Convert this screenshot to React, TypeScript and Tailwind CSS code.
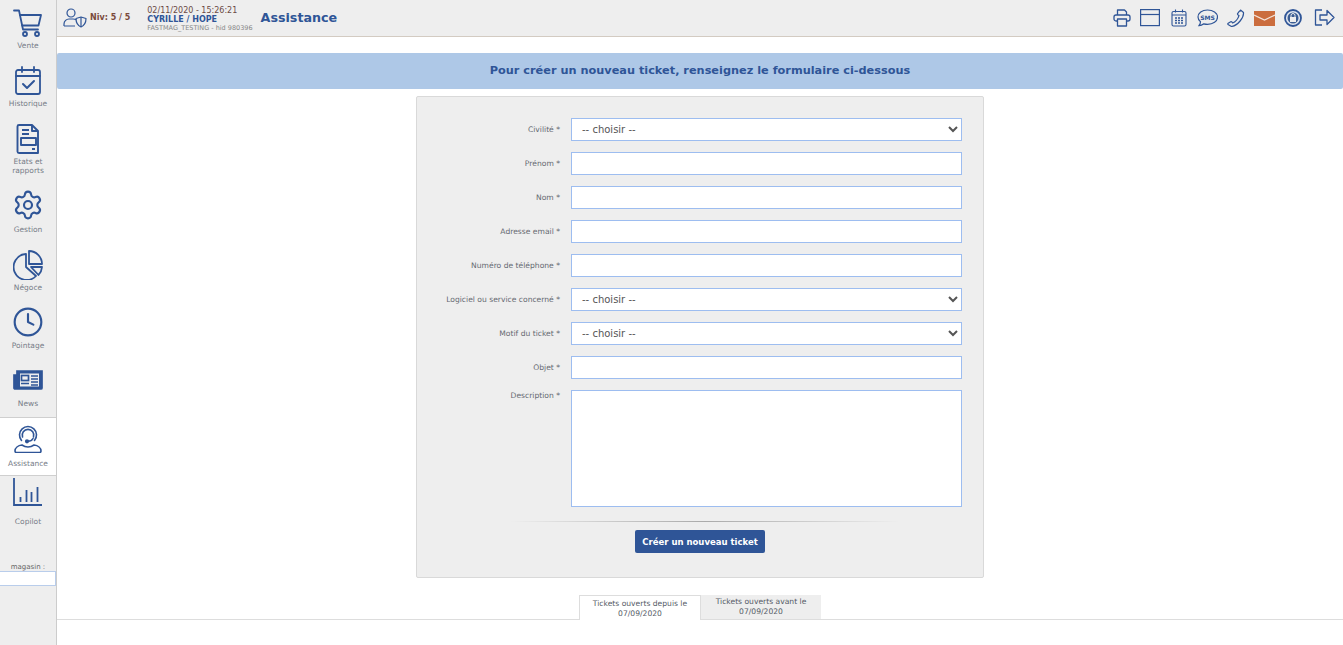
import { Clock, Settings } from "lucide-react";
import type { ReactNode } from "react";

const blue = "#2f5597";
const texture = "bg-[#eeeeee] bg-[radial-gradient(#e2e2e2_0.6px,transparent_0.7px)] bg-[length:4px_4px]";

const Cart = () => (
  <svg width="30" height="30" viewBox="0 0 30 30" fill="none" stroke={blue} strokeWidth="1.8" strokeLinejoin="round" strokeLinecap="round">
    <path d="M1 2.5h5l4 19h15" />
    <path d="M7 7h21l-2.5 10.5H9.200" />
    <circle cx="12" cy="26" r="2" />
    <circle cx="24" cy="26" r="2" />
  </svg>
);

const Calendar = () => (
  <svg width="30" height="30" viewBox="0 0 30 30" fill="none" stroke={blue} strokeWidth="1.8" strokeLinejoin="round" strokeLinecap="round">
    <rect x="3" y="4" width="24" height="24" rx="2" />
    <path d="M3 10h24M9 1v5M21 1v5" />
    <path d="M10 18l4 4 7-7" strokeWidth="2" />
  </svg>
);

const Report = () => (
  <svg width="30" height="30" viewBox="0 0 30 30" fill="none" stroke={blue} strokeWidth="1.9" strokeLinejoin="round">
    <path d="M6 1h13l6 6v22H6a1.500 1.500 0 0 1-1.500-1.500v-25A1.500 1.500 0 0 1 6 1z" />
    <path d="M19 1v6h6M9 6h7M9 10h7M19 25h3" />
    <rect x="8" y="14" width="15" height="7" />
  </svg>
);

const Pie = () => (
  <svg width="30" height="30" viewBox="0 0 30 30" fill="none" stroke={blue} strokeWidth="1.8" strokeLinejoin="round">
    <path d="M13 4A13 13 0 1 0 23 26L13 17z" />
    <path d="M16 1A13 13 0 0 1 29 14H16z" />
    <path d="M18 17H29A13 13 0 0 1 25.500 25z" />
  </svg>
);

const News = () => (
  <svg width="30" height="20" viewBox="0 0 30 20" fill="none" stroke={blue} strokeWidth="1.700">
    <path d="M4 1h25v17a1 1 0 0 1-1 1H2a1 1 0 0 1-1-1V5h3z" fill={blue} />
    <rect x="7" y="3.500" width="19" height="13" fill="#eeeeee" stroke="none" />
    <rect x="8.500" y="5.500" width="7" height="5" />
    <path d="M8 13.500h8M18 6h7M18 9h7M18 12h7M18 15h7" />
  </svg>
);

const Agent = () => (
  <svg width="28" height="28" viewBox="0 0 28 28" fill="none" stroke={blue} strokeWidth="1.600" strokeLinecap="round">
    <path d="M7.500 15.500A8.500 8.500 0 1 1 20.500 15.500" />
    <path d="M8.500 12a5.800 5.800 0 1 1 11 0" />
    <path d="M19 13.500c-1 2-2.500 2.800-5 2.800" />
    <circle cx="13" cy="16.300" r="1.300" fill={blue} />
    <path d="M8 20c-4 .5-7 3-7 6 0 1 .5 1.500 1.500 1.500h23c1 0 1.500-.5 1.500-1.500 0-3-3-5.500-7-6-2 1.500-3.500 2-6 2s-4-.5-6-2z" strokeLinejoin="round" />
  </svg>
);

const Bars = () => (
  <svg width="30" height="29" viewBox="0 0 30 29" fill="none" stroke={blue} strokeWidth="1.800">
    <path d="M1 0v27h28" />
    <path d="M7.500 24v-5M13.500 24V12M18.500 24V14M24.500 24V9" strokeWidth="1.800" />
  </svg>
);

const PrinterIcon = () => (
  <svg width="18" height="18" viewBox="0 0 18 18" fill="none" stroke={blue} strokeWidth="1.300" strokeLinejoin="round">
    <path d="M4.500 6V1h7l2 2v3" />
    <rect x="1" y="6" width="16" height="6" rx="2" />
    <rect x="4.500" y="10" width="9" height="7" fill="#eeeeee" />
  </svg>
);

const WindowIcon = () => (
  <svg width="20" height="18" viewBox="0 0 20 18" fill="none" stroke={blue} strokeWidth="1.200">
    <rect x="0.600" y="0.600" width="18.800" height="16" />
    <path d="M1 5.500h18" />
  </svg>
);

const CalendarSmall = () => (
  <svg width="16" height="18" viewBox="0 0 16 18" fill="none" stroke={blue} strokeWidth="1.100">
    <rect x="1" y="2.500" width="14" height="14.500" rx="1.500" />
    <path d="M1 6h14M4.500 0.500v3M11.500 0.500v3" />
    <path d="M4 9h8M4 11.500h8M4 14h8" strokeWidth="1.500" strokeDasharray="2 1" />
  </svg>
);

const Sms = () => (
  <svg width="21" height="18" viewBox="0 0 21 18" fill="none" stroke={blue} strokeWidth="1.200">
    <path d="M10.500 1C5 1 1 4 1 8c0 2 1 3.500 2.500 4.700 0 1.500-.7 2.800-1.500 4 1.800 0 3.500-.8 4.800-1.900 1.200.3 2.400.5 3.700.5 5.500 0 10-3 10-7.300S16 1 10.500 1z" />
    <text x="10.500" y="10.500" textAnchor="middle" fontSize="6" fontWeight="700" fontFamily="'DejaVu Sans', sans-serif" fill={blue} stroke="none">SMS</text>
  </svg>
);

const PhoneIcon = () => (
  <svg width="18" height="18" viewBox="0 0 18 18" fill="none" stroke={blue} strokeWidth="1.200" strokeLinejoin="round">
    <path d="M13.500 1l3 2.500c.5 5-5.500 13-12 14L1 15.500c-.3-.5-.2-1 .2-1.300l2.500-1.500c.4-.2.800-.1 1.100.2l.9 1.100c2.500-1 5.500-4.500 6.300-7.500l-1.200-.8c-.3-.3-.4-.7-.2-1.100l1.800-2.500c.2-.3.600-.4.900-.1z" />
  </svg>
);

const Envelope = () => (
  <svg width="21" height="15" viewBox="0 0 21 15">
    <rect width="21" height="15" fill="#cb6d3e" />
    <path d="M0 4l10.500 5L21 4" fill="none" stroke="#f4e4da" strokeWidth="1.200" />
  </svg>
);

const LockIcon = () => (
  <svg width="18" height="18" viewBox="0 0 18 18" fill="none">
    <circle cx="9" cy="9" r="8" fill="#dfe5ee" stroke={blue} strokeWidth="1.800" />
    <circle cx="9" cy="9" r="5.500" fill="#3b5d93" />
    <path d="M7 8V6.500a2 2 0 0 1 4 0V8" stroke="#eeeeee" strokeWidth="1" />
    <rect x="6" y="8" width="6" height="5" fill="#eeeeee" />
  </svg>
);

const Exit = () => (
  <svg width="21" height="18" viewBox="0 0 21 18" fill="none" stroke={blue} strokeWidth="1.300" strokeLinejoin="round">
    <path d="M8 1H1.500v15H8" />
    <path d="M6 6h7V1.500L20 8.500l-7 7V11H6z" />
  </svg>
);

const UserShield = () => (
  <svg width="24" height="20" viewBox="0 0 24 20" fill="none" stroke={blue} strokeWidth="1.200" strokeLinejoin="round">
    <circle cx="8" cy="5" r="4" />
    <path d="M1 18v-2c0-3 2.500-5 5-5h4c1.500 0 2.500.4 3.500 1M1 18h11" />
    <path d="M18 9l5 1.500c0 4-1.500 7-5 8.500-3.500-1.500-5-4.500-5-8.500z" />
    <path d="M18 9v10" />
  </svg>
);

function NavItem({ icon, label, h = "h-[58px]", active = false }: { icon: ReactNode; label: ReactNode; h?: string; active?: boolean }) {
  return (
    <div className={`${h} flex flex-col items-center ${active ? "bg-white border-y border-[#cfcfcf]" : ""}`}>
      <div className="h-[38px] flex items-end justify-center">{icon}</div>
      <div className="mt-[3px] text-[7.500px] leading-[9px] text-center text-[#777d88]">{label}</div>
    </div>
  );
}

function Row({ label, children }: { label: string; children: ReactNode }) {
  return (
    <div className="flex h-[34px]">
      <label className="w-[133px] pt-[7px] text-right text-[7.600px] leading-[10px] text-[#666a72] whitespace-nowrap">{label} *</label>
      <div className="ml-[11px] w-[391px]">{children}</div>
    </div>
  );
}

const fieldClass = "block w-full h-[23px] bg-white border border-[#9dbdf0] text-[#555555] text-[10px] outline-none";

function Choice() {
  return (
    <select className={`${fieldClass} pl-[6px]`} defaultValue="">
      <option value="">-- choisir --</option>
    </select>
  );
}

export default function App() {
  return (
    <div className="flex h-[645px] w-[1343px] overflow-hidden bg-white font-['DejaVu_Sans',sans-serif]">
      <aside className={`w-[57px] shrink-0 border-r border-[#cccccc] ${texture}`}>
        <NavItem icon={<Cart />} label="Vente" />
        <NavItem icon={<Calendar />} label="Historique" />
        <NavItem icon={<Report />} label={<>Etats et<br />rapports</>} h="h-[68px]" />
        <NavItem icon={<div className="mb-[1px]"><Settings size={32} strokeWidth={1.6} color={blue} /></div>} label="Gestion" />
        <NavItem icon={<Pie />} label="Négoce" />
        <NavItem icon={<Clock size={32} strokeWidth={1.6} color={blue} />} label="Pointage" />
        <NavItem icon={<div className="mb-[6px]"><News /></div>} label="News" h="h-[59px]" />
        <NavItem icon={<div className="mb-[3px]"><Agent /></div>} label="Assistance" h="h-[59px]" active />
        <NavItem icon={<div className="mb-[7px]"><Bars /></div>} label="Copilot" />
        <div className="mt-[30px] text-center text-[7px] leading-[7px] text-[#666666]">magasin :</div>
        <div className="h-[15px] bg-white border border-l-0 border-[#b9cdeb]" />
      </aside>

      <div className="flex-1 min-w-0">
        <header className={`h-[37px] border-b border-[#d3cbc2] flex items-center pl-[6px] pr-[8px] ${texture}`}>
          <UserShield />
          <span className="ml-[3px] text-[8px] font-bold text-[#7a4a3c] whitespace-nowrap">Niv: 5 / 5</span>
          <div className="ml-[17px] mt-[4px] flex flex-col leading-[8.500px] whitespace-nowrap">
            <span className="text-[8px] text-[#6b4a44]">02/11/2020 - 15:26:21</span>
            <span className="text-[8px] font-bold text-[#2f5597]">CYRILLE / HOPE</span>
            <span className="text-[6.500px] text-[#888888]">FASTMAG_TESTING - hid 980396</span>
          </div>
          <h1 className="ml-[8px] text-[12.700px] font-bold text-[#2f5597]">Assistance</h1>
          <div className="ml-auto flex items-center gap-[9px]">
            <PrinterIcon />
            <WindowIcon />
            <div className="ml-[2px]"><CalendarSmall /></div>
            <div className="ml-[1px]"><Sms /></div>
            <PhoneIcon />
            <Envelope />
            <LockIcon />
            <div className="ml-[3px]"><Exit /></div>
          </div>
        </header>

        <main>
          <div className="mt-[16px] h-[36px] rounded-[2px] bg-[#aec8e7] flex items-center justify-center text-[11.300px] font-bold text-[#2f5597]">
            Pour créer un nouveau ticket, renseignez le formulaire ci-dessous
          </div>

          <form className={`mt-[7px] ml-[359px] w-[568px] h-[482px] border border-[#d9d9d9] rounded-[2px] pt-[21px] pl-[10px] ${texture}`}>
            <Row label="Civilité"><Choice /></Row>
            <Row label="Prénom"><input className={fieldClass} /></Row>
            <Row label="Nom"><input className={fieldClass} /></Row>
            <Row label="Adresse email"><input className={fieldClass} /></Row>
            <Row label="Numéro de téléphone"><input className={fieldClass} /></Row>
            <Row label="Logiciel ou service concerné"><Choice /></Row>
            <Row label="Motif du ticket"><Choice /></Row>
            <Row label="Objet"><input className={fieldClass} /></Row>
            <div className="flex">
              <label className="w-[133px] pt-[1px] text-right text-[7.600px] leading-[10px] text-[#666a72]">Description *</label>
              <textarea className="ml-[11px] block w-[391px] h-[117px] bg-white border border-[#9dbdf0] resize-none outline-none" />
            </div>
            <div className="mt-[14px] ml-[83px] w-[390px] h-[1px] bg-gradient-to-r from-transparent via-[#aaaaaa] to-transparent" />
            <button type="button" className="block mt-[8px] ml-[208px] w-[130px] h-[23px] pt-[1px] rounded-[2px] bg-[#2f5597] text-white text-[8.500px] font-bold">
              Créer un nouveau ticket
            </button>
          </form>

          <div className="mt-[17px] h-[25px] border-b border-[#dddddd] flex justify-center">
            <div className="w-[122px] h-[25px] bg-white border border-b-0 border-[#dddddd] text-center text-[7.600px] leading-[10px] pt-[3px] text-[#555b66]">
              Tickets ouverts depuis le<br />07/09/2020
            </div>
            <div className="w-[120px] h-[24px] bg-[#eeeeee] text-center text-[7.600px] leading-[10px] pt-[2px] text-[#555b66]">
              Tickets ouverts avant le<br />07/09/2020
            </div>
          </div>
        </main>
      </div>
    </div>
  );
}
